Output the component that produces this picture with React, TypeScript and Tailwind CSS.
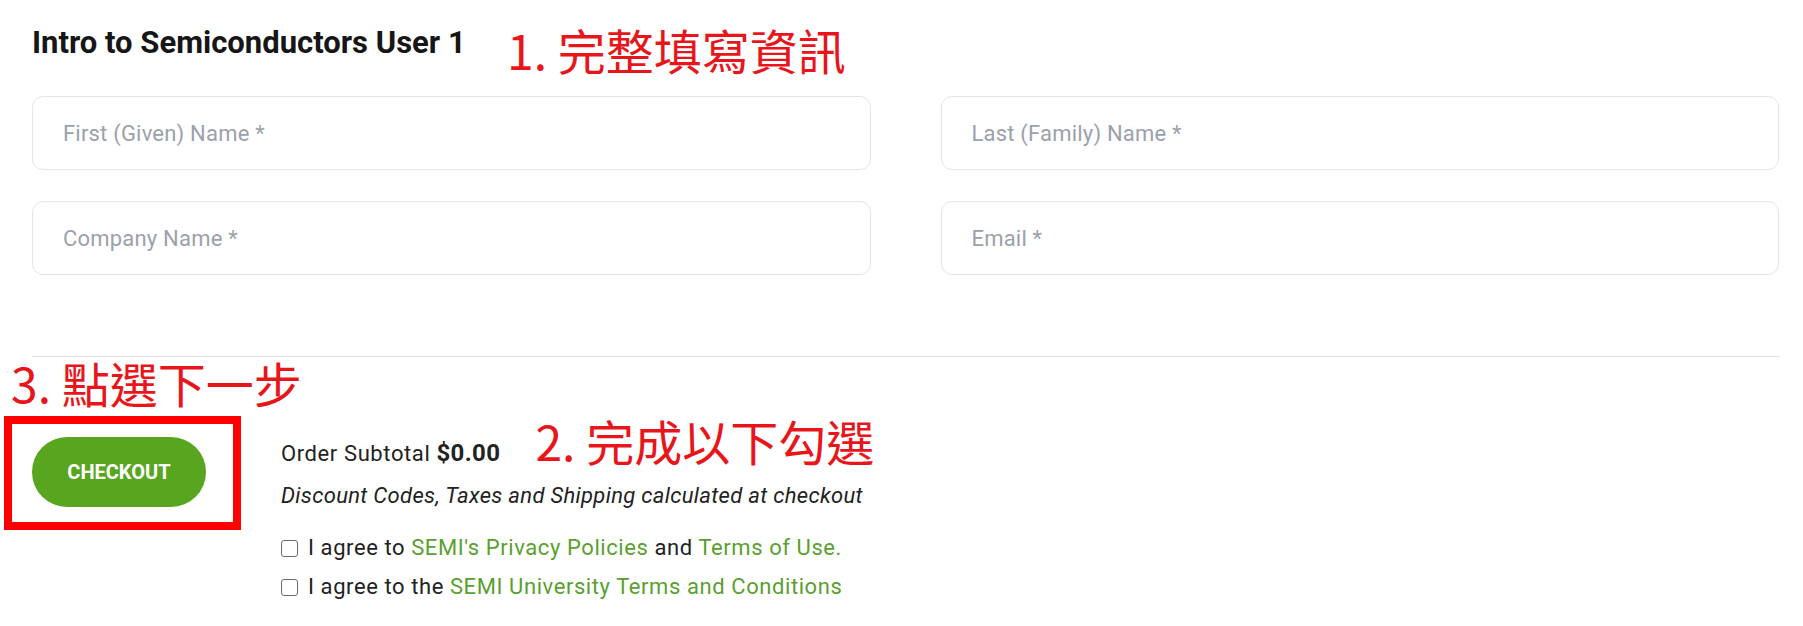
const annot =
	"font-['Noto_Sans_CJK_TC',sans-serif] text-[48px] leading-none text-[#e8151b] whitespace-nowrap";

interface FieldProps {
	placeholder: string;
}
function Field({ placeholder }: FieldProps) {
	return (
		<input
			type="text"
			placeholder={placeholder}
			className="h-[74px] w-full rounded-[11px] border border-[#e3e5e8] bg-white px-[30px] text-[22px] tracking-[0.2px] text-gray-800 outline-none placeholder:text-[#9ba1ab]"
		/>
	);
}

function Agree({ children }: { children: React.ReactNode }) {
	return (
		<label className="flex items-center gap-[10px] text-[22px] leading-[26px] tracking-[0.58px]">
			<input
				type="checkbox"
				className="h-[17px] w-[17px] appearance-none rounded-[3px] border border-[#6b6b6b] bg-white"
			/>
			<span>{children}</span>
		</label>
	);
}

export default function App() {
	return (
		<div className="min-h-[626px] w-full bg-white font-[Roboto,sans-serif] text-[#222]">
			{/* title + note 1 */}
			<div className="flex items-start pl-[32px] pt-[25px]">
				<h2 className="w-[475px] text-[31px] font-bold leading-[36px] text-[#161616]">
					Intro to Semiconductors User 1
				</h2>
				<span className={annot}>1. 完整填寫資訊</span>
			</div>

			<div className="mt-[23px] grid grid-cols-2 gap-x-[70px] gap-y-[31px] pl-[32px] pr-[24px]">
				<Field placeholder="First (Given) Name *" />
				<Field placeholder="Last (Family) Name *" />
				<Field placeholder="Company Name *" />
				<Field placeholder="Email *" />
			</div>

			<div className="mr-[23px] ml-[32px] mt-[81px] border-t border-[#e2e2e2]" />

			<div className="mt-[1px] pl-[11px]">
				<span className={annot}>3. 點選下一步</span>
			</div>

			<div className="mt-[6px] flex items-start pl-[4px]">
				<div className="h-[114px] w-[237px] border-[8px] border-[#ff0000] pl-[20px] pt-[13px]">
					<button className="flex h-[70px] w-[174px] items-center justify-center rounded-full bg-[#58a51f] text-[20px] font-bold text-white">
						CHECKOUT
					</button>
				</div>

				<div className="ml-[40px] flex flex-col">
					<div className="flex items-end">
						<p className="mb-[-3px] text-[22px] leading-[26px] tracking-[0.6px]">
							Order Subtotal <b className="text-[24px] tracking-[0.4px]">$0.00</b>
						</p>
						<span className={`${annot} ml-[35px]`}>2. 完成以下勾選</span>
					</div>
					<p className="mt-[19px] text-[22px] italic leading-[26px] tracking-[0.32px]">
						Discount Codes, Taxes and Shipping calculated at checkout
					</p>
					<div className="mt-[26px] flex flex-col gap-[13px]">
						<Agree>
							I agree to{" "}
							<a className="text-[#5a9f30]">SEMI's Privacy Policies</a> and{" "}
							<a className="text-[#5a9f30]">Terms of Use.</a>
						</Agree>
						<Agree>
							I agree to the{" "}
							<a className="text-[#5a9f30]">SEMI University Terms and Conditions</a>
						</Agree>
					</div>
				</div>
			</div>
		</div>
	);
}
